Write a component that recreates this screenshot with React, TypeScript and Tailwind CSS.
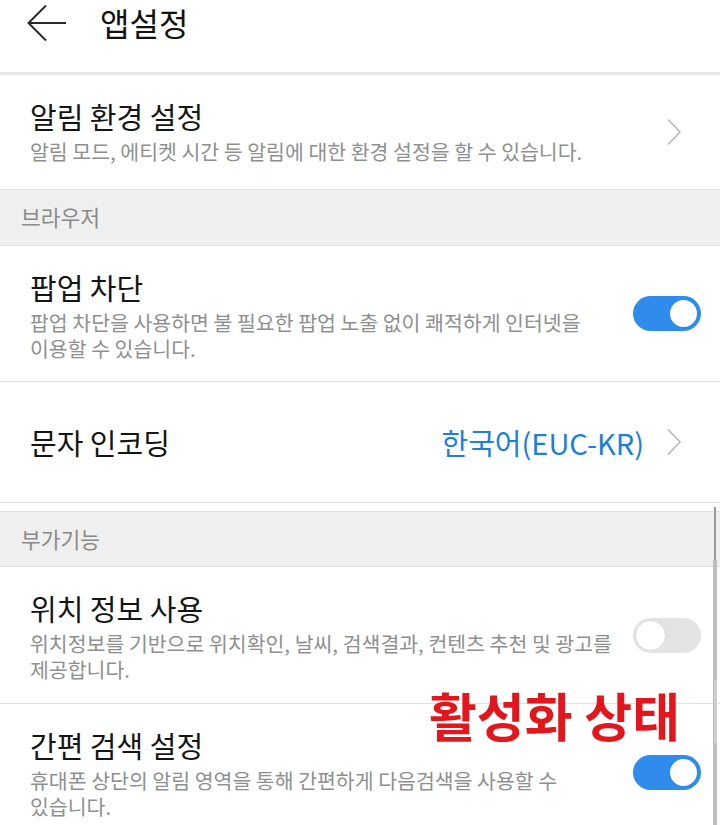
import React from "react";

const FONT = "font-['Noto_Sans_CJK_KR','Noto_Sans',sans-serif]";

function Chevron() {
  return (
    <svg width="16" height="28" viewBox="0 0 16 28" className="shrink-0">
      <path d="M2 1.5 L14 14 L2 26.5" fill="none" stroke="#b8b8b8" strokeWidth="1.6" />
    </svg>
  );
}

function Toggle({ on }: { on: boolean }) {
  return on ? (
    <div className="flex h-[35px] w-[68px] shrink-0 items-center justify-end rounded-full bg-[#2f8cec] pr-[2px]">
      <div className="h-[31px] w-[31px] rounded-full border-2 border-[#2f8cec] bg-white" />
    </div>
  ) : (
    <div className="flex h-[35px] w-[68px] shrink-0 items-center justify-start rounded-full bg-[#e3e3e3] pl-[2px]">
      <div className="h-[31px] w-[31px] rounded-full border border-[#dcdcdc] bg-white" />
    </div>
  );
}

function SettingRow({
  title,
  lines,
  toggle,
  chevron,
  height,
  border = true,
}: {
  title: string;
  lines: string[];
  toggle?: boolean;
  chevron?: boolean;
  height: string;
  border?: boolean;
}) {
  return (
    <div
      className={
        "flex items-center justify-between pl-[30px] pr-[19px] " +
        height +
        (border ? " border-b border-[#e2e2e2]" : "")
      }
    >
      <div className="self-start pt-[23px]">
        <div className="text-[29px] leading-[36px] text-[#151515]">{title}</div>
        <div className="mt-[4px] text-[20.5px] leading-[26px] text-[#8f8f8f]">
          {lines.map((l) => (
            <div key={l} className="whitespace-nowrap">
              {l}
            </div>
          ))}
        </div>
      </div>
      {toggle !== undefined && <Toggle on={toggle} />}
      {chevron && (
        <div className="pr-[19px]">
          <Chevron />
        </div>
      )}
    </div>
  );
}

function SectionHeader({ label, top = false }: { label: string; top?: boolean }) {
  return (
    <div
      className={
        "flex h-[56px] items-center border-b border-[#e2e2e2] bg-[#efefef] pl-[21px] text-[21.5px] text-[#8a8a8a] " +
        (top ? "border-t" : "")
      }
    >
      {label}
    </div>
  );
}

export default function App() {
  return (
    <div className={"relative h-[825px] w-[720px] overflow-hidden bg-white " + FONT}>
      <header className="flex h-[75px] items-start gap-[33px] border-b-[3px] border-[#e6e6e6] pl-[27px] pt-[3px]">
        <svg width="40" height="38" viewBox="0 0 40 38" className="mt-[1px]">
          <path d="M1.5 19 H39 M19 1.5 L1.5 19 L19 36.5" fill="none" stroke="#2a2a2a" strokeWidth="2" />
        </svg>
        <h1 className="text-[32px] leading-[38px] text-[#111]">앱설정</h1>
      </header>

      <SettingRow
        title="알림 환경 설정"
        lines={["알림 모드, 에티켓 시간 등 알림에 대한 환경 설정을 할 수 있습니다."]}
        chevron
        height="h-[115px]"
      />

      <SectionHeader label="브라우저" />

      <SettingRow
        title="팝업 차단"
        lines={["팝업 차단을 사용하면 불 필요한 팝업 노출 없이 쾌적하게 인터넷을", "이용할 수 있습니다."]}
        toggle
        height="h-[136px]"
      />

      <div className="flex h-[121px] items-center justify-between border-b border-[#e2e2e2] pl-[30px] pr-[38px]">
        <div className="text-[29px] leading-[36px] text-[#151515]">문자 인코딩</div>
        <div className="flex items-center gap-[22px]">
          <span className="text-[29px] leading-[36px] text-[#1d7fd8]">한국어(EUC-KR)</span>
          <Chevron />
        </div>
      </div>

      <div className="h-[8px]" />

      <SectionHeader label="부가기능" top />

      <SettingRow
        title="위치 정보 사용"
        lines={["위치정보를 기반으로 위치확인, 날씨, 검색결과, 컨텐츠 추천 및 광고를", "제공합니다."]}
        toggle={false}
        height="h-[137px]"
      />

      <SettingRow
        title="간편 검색 설정"
        lines={["휴대폰 상단의 알림 영역을 통해 간편하게 다음검색을 사용할 수", "있습니다."]}
        toggle
        height="h-[137px]"
        border={false}
      />

      {/* annotation overlay */}
      <div className="absolute left-[429px] top-[685px] text-[52px] font-bold leading-[60px] text-[#e3161d]">
        활성화 상태
      </div>

      {/* scrollbar overlay */}
      <div className="absolute right-[4px] top-[507px] h-[53px] w-[2px] bg-[#9a9a9a]" />
      <div className="absolute right-[3px] top-[560px] bottom-0 w-[4px] bg-[#bdbdbd]" />
      <div className="absolute right-[3px] top-[680px] h-[63px] w-[3px] bg-[#cfcfcf]" />
    </div>
  );
}
